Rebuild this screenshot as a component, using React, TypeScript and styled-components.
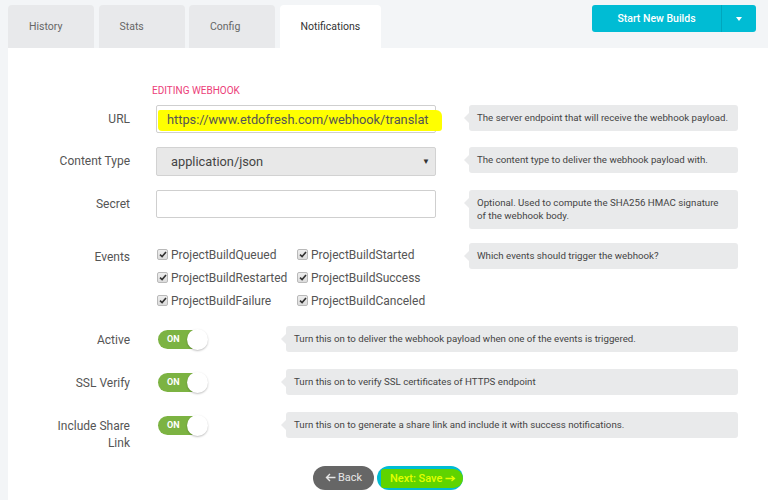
import React from "react";
import styled, { createGlobalStyle } from "styled-components";

const GlobalStyle = createGlobalStyle`
  html, body {
    margin: 0;
    padding: 0;
    background: #f3f5f7;
    font-family: Roboto, "Liberation Sans", Arial, sans-serif;
  }
  * { box-sizing: border-box; }
`;

const Page = styled.div`
  width: 768px;
  height: 500px;
  overflow: hidden;
  padding-left: 8px;
`;

const Header = styled.div`
  display: flex;
  justify-content: space-between;
  align-items: flex-start;
  padding: 5px 12px 0 0;
`;

const Tabs = styled.div`
  display: flex;
  gap: 4.5px;
`;

const Tab = styled.div<{ $active?: boolean }>`
  min-width: 86px;
  height: 43px;
  padding: 0 21px;
  display: flex;
  align-items: center;
  font-size: 10.5px;
  border-radius: 4px 4px 0 0;
  background: ${(p) => (p.$active ? "#ffffff" : "#e8e9eb")};
  color: ${(p) => (p.$active ? "#333" : "#666")};
`;

const SplitButton = styled.div`
  display: flex;
  height: 27px;
  border-radius: 3px;
  overflow: hidden;
  background: #00bcd4;
  color: #fff;
`;

const MainAction = styled.div`
  width: 129px;
  display: flex;
  align-items: center;
  justify-content: center;
  font-size: 10.5px;
  font-weight: 500;
`;

const Caret = styled.div`
  width: 35px;
  display: flex;
  align-items: center;
  justify-content: center;
  border-left: 1px solid #00a6bd;
  &::after {
    content: "";
    border-left: 3.5px solid transparent;
    border-right: 3.5px solid transparent;
    border-top: 4px solid #fff;
  }
`;

const Panel = styled.div`
  background: #fff;
  height: 452px;
  padding: 37px 30px 0 0;
`;

const Title = styled.div`
  margin-left: 144px;
  height: 12px;
  line-height: 12px;
  font-size: 10px;
  color: #ec407a;
  text-transform: uppercase;
  margin-bottom: 8px;
`;

const Row = styled.div<{ $minH?: number }>`
  display: flex;
  align-items: flex-start;
  min-height: ${(p) => p.$minH ?? 0}px;
  margin-bottom: 14px;
`;

const Label = styled.div`
  width: 122px;
  margin-right: 26px;
  padding-top: 5.5px;
  text-align: right;
  font-size: 12px;
  line-height: 17px;
  color: #555;
`;

const Control = styled.div`
  width: 280px;
  margin-right: 33px;
  flex-shrink: 0;
`;

const Field = styled.div<{ $h?: number }>`
  position: relative;
  height: ${(p) => p.$h ?? 28}px;
  border: 1px solid #cfcfcf;
  border-radius: 2px;
  background: #fff;
  padding: 0 10px;
  display: flex;
  align-items: center;
  font-size: 12.8px;
  color: #555;
  white-space: nowrap;
`;

const Highlight = styled.span`
  position: absolute;
  left: 1px;
  right: -7px;
  top: 4px;
  bottom: 1px;
  background: #ffff00;
  border-radius: 2px 6px 3px 4px;
`;

const FieldText = styled.span`
  position: relative;
`;

const Select = styled(Field)`
  background: #e8e8e8;
  border-color: #d2d2d2;
  padding: 0 5px 0 14px;
  justify-content: space-between;
  color: #444;
  &::after {
    content: "▼";
    font-size: 8px;
    color: #333;
  }
`;

const Help = styled.div`
  position: relative;
  flex: 1;
  background: #e9eaeb;
  border-radius: 3px;
  padding: 6px 4px 7px 8px;
  font-size: 9.7px;
  line-height: 13px;
  color: #444;
  white-space: nowrap;
  &::before {
    content: "";
    position: absolute;
    left: -5px;
    top: 8px;
    border-top: 5px solid transparent;
    border-bottom: 5px solid transparent;
    border-right: 5px solid #e9eaeb;
  }
`;

const EventGrid = styled.div`
  display: grid;
  grid-template-columns: 140px auto;
  grid-auto-rows: 23px;
  margin-left: 1px;
`;

const EventItem = styled.label`
  display: flex;
  align-items: center;
  gap: 3px;
  font-size: 12px;
  color: #555;
  white-space: nowrap;
`;

const Box = styled.span`
  width: 11px;
  height: 11px;
  border: 1px solid #b9b9b9;
  border-radius: 2px;
  background: linear-gradient(#eeeeee, #dcdcdc);
  display: flex;
  align-items: center;
  justify-content: center;
`;

const ToggleArea = styled.div`
  width: 130px;
  padding: 4px 0 0 2px;
  flex-shrink: 0;
`;

const Track = styled.div`
  position: relative;
  width: 49px;
  height: 19px;
  border-radius: 10px;
  background: #7cb342;
  color: #fff;
  font-size: 9px;
  font-weight: 700;
  line-height: 19px;
  padding-left: 9px;
`;

const Knob = styled.span`
  position: absolute;
  right: -1px;
  top: -1px;
  width: 21px;
  height: 21px;
  border-radius: 50%;
  background: #fff;
  box-shadow: 0 1px 2px rgba(0, 0, 0, 0.25);
`;

const Actions = styled.div`
  display: flex;
  justify-content: center;
  gap: 3px;
  margin: 6px -30px 0 0;
`;

const Pill = styled.div<{ $bg: string }>`
  height: 24px;
  border-radius: 12px;
  background: ${(p) => p.$bg};
  display: flex;
  align-items: center;
  font-size: 11px;
  color: #e6e6e6;
`;

const BackButton = styled(Pill)`
  width: 61px;
  justify-content: center;
  gap: 2px;
`;

const NextButton = styled(Pill)`
  width: 86px;
  padding: 3px 0 2px 4px;
`;

const Marker = styled.span`
  flex: 1;
  align-self: stretch;
  display: flex;
  align-items: center;
  gap: 3px;
  padding-left: 9px;
  background: #5fd400;
  border-radius: 3px 10px 10px 3px;
  color: #e4ff00;
  font-weight: 500;
`;

const Arrow = ({ dir, color }: { dir: "left" | "right"; color: string }) => (
  <svg width="11" height="9" viewBox="0 0 11 9">
    {dir === "left" ? (
      <path d="M10.5 4.5 H1.5 M5 1 L1.5 4.5 L5 8" fill="none" stroke={color} strokeWidth="1.4" />
    ) : (
      <path d="M0.5 4.5 H9.5 M6.5 2 L9.5 4.5 L6.5 7" fill="none" stroke={color} strokeWidth="1.3" />
    )}
  </svg>
);

const Check = () => (
  <Box>
    <svg width="8" height="7" viewBox="0 0 8 7">
      <path d="M1 3.6 L3.1 5.6 L7 1" fill="none" stroke="#333" strokeWidth="1.6" />
    </svg>
  </Box>
);

const Toggle = () => (
  <ToggleArea>
    <Track>
      ON
      <Knob />
    </Track>
  </ToggleArea>
);

const events = [
  "ProjectBuildQueued",
  "ProjectBuildStarted",
  "ProjectBuildRestarted",
  "ProjectBuildSuccess",
  "ProjectBuildFailure",
  "ProjectBuildCanceled",
];

const App = () => (
  <Page>
    <GlobalStyle />
    <Header>
      <Tabs>
        <Tab>History</Tab>
        <Tab>Stats</Tab>
        <Tab>Config</Tab>
        <Tab $active>Notifications</Tab>
      </Tabs>
      <SplitButton>
        <MainAction>Start New Builds</MainAction>
        <Caret />
      </SplitButton>
    </Header>
    <Panel>
      <Title>Editing Webhook</Title>
      <Row>
        <Label>URL</Label>
        <Control>
          <Field>
            <Highlight />
            <FieldText>https://www.etdofresh.com/webhook/translat</FieldText>
          </Field>
        </Control>
        <Help>The server endpoint that will receive the webhook payload.</Help>
      </Row>
      <Row>
        <Label>Content Type</Label>
        <Control>
          <Select $h={29}>application/json</Select>
        </Control>
        <Help>The content type to deliver the webhook payload with.</Help>
      </Row>
      <Row>
        <Label>Secret</Label>
        <Control>
          <Field />
        </Control>
        <Help>
          Optional. Used to compute the SHA256 HMAC signature
          <br />
          of the webhook body.
        </Help>
      </Row>
      <Row>
        <Label>Events</Label>
        <Control>
          <EventGrid>
            {events.map((e) => (
              <EventItem key={e}>
                <Check />
                {e}
              </EventItem>
            ))}
          </EventGrid>
        </Control>
        <Help>Which events should trigger the webhook?</Help>
      </Row>
      <Row $minH={29}>
        <Label>Active</Label>
        <Toggle />
        <Help>Turn this on to deliver the webhook payload when one of the events is triggered.</Help>
      </Row>
      <Row $minH={29}>
        <Label>SSL Verify</Label>
        <Toggle />
        <Help>Turn this on to verify SSL certificates of HTTPS endpoint</Help>
      </Row>
      <Row $minH={29}>
        <Label>
          Include Share
          <br />
          Link
        </Label>
        <Toggle />
        <Help>Turn this on to generate a share link and include it with success notifications.</Help>
      </Row>
      <Actions>
        <BackButton $bg="#666666">
          <Arrow dir="left" color="#e6e6e6" />
          <span>Back</span>
        </BackButton>
        <NextButton $bg="#00bcd4">
          <Marker>
            <span>Next: Save</span>
            <Arrow dir="right" color="#e4ff00" />
          </Marker>
        </NextButton>
      </Actions>
    </Panel>
  </Page>
);

export default App;
